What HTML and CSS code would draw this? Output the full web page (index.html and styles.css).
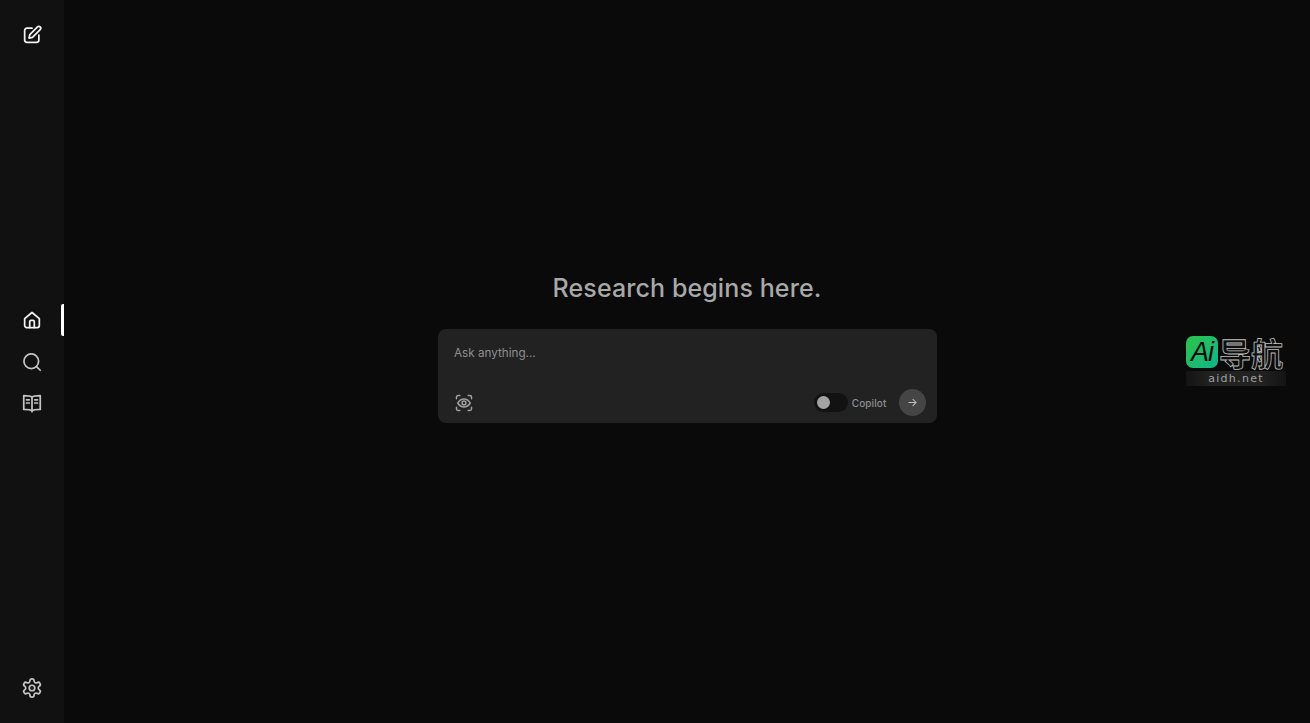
FILE: index.html
```html
<!DOCTYPE html>
<html lang="en">
<head>
<meta charset="utf-8">
<title>Research begins here.</title>
<link rel="stylesheet" href="styles.css">
</head>
<body>
<aside class="sidebar">
  <div class="side-group">
    <button class="side-btn bright" aria-label="New">
      <svg viewBox="0 0 24 24" class="icon"><path d="M12 4.500H6.500A2.500 2.500 0 0 0 4 7v10.500A2.500 2.500 0 0 0 6.500 20H17a2.500 2.500 0 0 0 2.500-2.500V12"/><path d="M18 3.200a2 2 0 0 1 2.900 2.900L12.500 14.500 8.800 15.300l.8-3.700z"/></svg>
    </button>
  </div>
  <nav class="side-group">
    <button class="side-btn bright active" aria-label="Home">
      <svg viewBox="0 0 24 24" class="icon"><path d="M4 10.500 12 3.800l8 6.700V18a2.200 2.200 0 0 1-2.200 2.200H6.200A2.200 2.200 0 0 1 4 18z"/><path d="M9.500 20.200V14a1.500 1.500 0 0 1 1.500-1.500h2a1.500 1.500 0 0 1 1.500 1.500v6.200"/></svg>
    </button>
    <button class="side-btn" aria-label="Search">
      <svg viewBox="0 0 24 24" class="icon"><circle cx="11.200" cy="11.200" r="8"/><path d="m17.200 17.200 3.800 3.800"/></svg>
    </button>
    <button class="side-btn" aria-label="Library">
      <svg viewBox="0 0 24 24" class="icon"><path d="M12 5.500C10.500 4.300 8 4 3 4v15c5 0 7.500.3 9 1.500 1.500-1.200 4-1.500 9-1.500V4c-5 0-7.500.3-9 1.500zM12 5.500v16"/><path d="M6 8.500h3M6 12h3M15 8.500h3M15 12h3"/></svg>
    </button>
  </nav>
  <div class="side-group">
    <button class="side-btn" aria-label="Settings">
      <svg viewBox="0 0 24 24" class="icon"><path d="M12.220 2h-.44a2 2 0 0 0-2 2v.18a2 2 0 0 1-1 1.730l-.43.25a2 2 0 0 1-2 0l-.15-.08a2 2 0 0 0-2.730.73l-.22.38a2 2 0 0 0 .73 2.730l.15.1a2 2 0 0 1 1 1.720v.51a2 2 0 0 1-1 1.740l-.15.09a2 2 0 0 0-.73 2.730l.22.38a2 2 0 0 0 2.730.73l.15-.08a2 2 0 0 1 2 0l.43.25a2 2 0 0 1 1 1.730V20a2 2 0 0 0 2 2h.44a2 2 0 0 0 2-2v-.18a2 2 0 0 1 1-1.730l.43-.25a2 2 0 0 1 2 0l.15.08a2 2 0 0 0 2.730-.73l.22-.39a2 2 0 0 0-.73-2.730l-.15-.08a2 2 0 0 1-1-1.740v-.5a2 2 0 0 1 1-1.740l.15-.09a2 2 0 0 0 .73-2.730l-.22-.38a2 2 0 0 0-2.730-.73l-.15.08a2 2 0 0 1-2 0l-.43-.25a2 2 0 0 1-1-1.730V4a2 2 0 0 0-2-2z"/><circle cx="12" cy="12" r="3"/></svg>
    </button>
  </div>
</aside>
<main class="main">
  <h1 class="title">Research begins here.</h1>
  <section class="card">
    <div class="placeholder">Ask anything...</div>
    <div class="card-row">
      <svg viewBox="0 0 24 24" class="focus-icon"><path d="M3 7V5a2 2 0 0 1 2-2h2M17 3h2a2 2 0 0 1 2 2v2M21 17v2a2 2 0 0 1-2 2h-2M7 21H5a2 2 0 0 1-2-2v-2"/><path d="M4.500 12C6.500 8.700 9 7.200 12 7.200s5.500 1.500 7.500 4.800c-2 3.300-4.500 4.800-7.500 4.800S6.500 15.300 4.500 12z"/><circle cx="12" cy="12" r="2.300"/></svg>
      <div class="controls">
        <span class="toggle"><span class="knob"></span></span>
        <span class="copilot">Copilot</span>
        <span class="send">
          <svg viewBox="0 0 24 24" class="arrow"><path d="M4 12h16M13 5l7 7-7 7"/></svg>
        </span>
      </div>
    </div>
  </section>
</main>
<div class="watermark">
  <div class="wm-top"><span class="wm-badge">Ai</span><span class="wm-cn">导航</span></div>
  <div class="wm-url">aidh.net</div>
</div>
</body>
</html>
```
FILE: styles.css
```css
* { box-sizing: border-box; }
html, body { height: 100%; }
body {
  margin: 0;
  display: flex;
  background: #0a0a0a;
  overflow: hidden;
  font-family: "Inter", "Liberation Sans", sans-serif;
}
.sidebar {
  width: 64px;
  height: 723px;
  flex: none;
  background: #111112;
  padding: 19px 0;
  display: flex;
  flex-direction: column;
  justify-content: space-between;
}
.side-group { display: flex; flex-direction: column; gap: 9.500px; }
.side-btn {
  position: relative;
  width: 64px;
  height: 32px;
  padding: 0;
  border: 0;
  background: none;
  display: flex;
  align-items: center;
  justify-content: center;
  color: #c4c4c4;
}
.side-btn.bright { color: #f2f2f2; }
.side-btn.active::after {
  content: "";
  position: absolute;
  right: 0;
  top: 0;
  width: 3.500px;
  height: 32px;
  background: #fff;
  border-radius: 2px 0 0 2px;
}
.icon {
  width: 22px;
  height: 22px;
  fill: none;
  stroke: currentColor;
  stroke-width: 1.900;
  stroke-linecap: round;
  stroke-linejoin: round;
}
.main {
  flex: 1;
  height: 723px;
  padding-top: 271px;
  display: flex;
  flex-direction: column;
  align-items: center;
}
.title {
  margin: 0 0 24px;
  height: 34px;
  line-height: 34px;
  font-size: 25px;
  font-weight: 500;
  letter-spacing: 0.1px;
  color: #a8a8a8;
}
.card {
  width: 499px;
  height: 94px;
  background: #222223;
  border-radius: 8px;
  padding: 16px 11px 7px 16.500px;
  display: flex;
  flex-direction: column;
  justify-content: space-between;
}
.placeholder {
  font-size: 11.700px;
  line-height: 16px;
  color: #8e8e8e;
}
.card-row { display: flex; align-items: center; justify-content: space-between; }
.focus-icon {
  width: 20px;
  height: 20px;
  fill: none;
  stroke: #a0a0a0;
  stroke-width: 1.800;
  stroke-linecap: round;
  stroke-linejoin: round;
}
.controls { display: flex; align-items: center; }
.toggle {
  width: 34px;
  height: 19px;
  border-radius: 10px;
  background: #121212;
  display: flex;
  align-items: center;
  padding-left: 3.500px;
}
.knob { width: 13px; height: 13px; border-radius: 50%; background: #a3a3a3; }
.copilot {
  margin-left: 4px;
  font-size: 10px;
  letter-spacing: 0.100px;
  font-weight: 500;
  color: #8e8e8e;
}
.send {
  margin-left: 12px;
  width: 27px;
  height: 27px;
  border-radius: 50%;
  background: #454545;
  display: flex;
  align-items: center;
  justify-content: center;
}
.arrow {
  width: 11px;
  height: 11px;
  fill: none;
  stroke: #c0c0c0;
  stroke-width: 2.200;
  stroke-linecap: round;
  stroke-linejoin: round;
}
.watermark {
  position: absolute;
  left: 1186px;
  top: 335px;
  width: 100px;
}
.wm-top { display: flex; align-items: center; height: 34px; }
.wm-badge {
  flex: none;
  width: 32px;
  height: 32px;
  border-radius: 7px;
  background: linear-gradient(135deg, #2fc24a, #10b58a);
  color: #0a0a0a;
  font-family: "Liberation Sans", sans-serif;
  font-size: 27px;
  font-style: italic;
  font-weight: 400;
  letter-spacing: -1px;
  line-height: 32px;
  text-align: center;
}
.wm-cn {
  margin-left: 1px;
  font-family: "Noto Sans CJK SC", sans-serif;
  font-size: 32px;
  line-height: 34px;
  font-weight: 700;
  color: #0f0f0f;
  -webkit-text-stroke: 0.800px #bdbdbd;
}
.wm-url {
  margin-top: 2px;
  height: 15px;
  background: linear-gradient(90deg, #141414, #222 25%, #222 75%, #141414);
  color: #a0a0a0;
  font-family: "DejaVu Sans", sans-serif;
  font-size: 11px;
  letter-spacing: 1.300px;
  line-height: 15px;
  text-align: center;
}
```
